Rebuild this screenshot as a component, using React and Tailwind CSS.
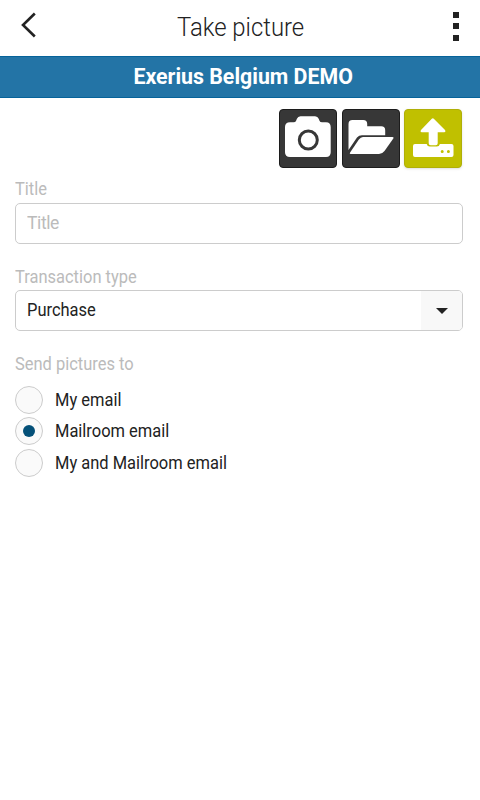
import { useState } from "react";

const options = ["My email", "Mailroom email", "My and Mailroom email"];

function CameraIcon() {
  return (
    <svg viewBox="1 1 56 57" className="h-full w-full" fill="#fff">
      <path d="M11 13.3h3.500q2 0 2.600-1.500l.8-2q1-2.600 3.600-2.600h14.600q2.600 0 3.600 2.600l.8 2q.6 1.500 2.600 1.500h3.900q4.700 0 4.700 4.700v25.300q0 4.700-4.700 4.700h-36Q6 48 6 43.300V18q0-4.700 5-4.700z" />
      <circle cx="29.3" cy="31" r="9" stroke="#373737" strokeWidth="3" />
    </svg>
  );
}

function FolderIcon() {
  return (
    <svg viewBox="1 1 56 57" className="h-full w-full" fill="#fff">
      <path d="M6.500 41V15q0-4 4-4h10.700q4 0 4 4v2.300h14q4 0 4 4v5H20q-3 0-5 2.300z" />
      <path d="M21 28h29.500q1.800 0 .8 1.600l-8.800 12.500q-2.200 3-5.500 3H8.800q-1.700 0-.7-1.600l8.600-12.700q1.900-2.800 4.300-2.800z" />
    </svg>
  );
}

function UploadIcon() {
  return (
    <svg viewBox="1 1 56 57" className="h-full w-full" fill="#fff">
      <path d="M27.800 9.700q1-1 2 0L41 21q1.200 2-.8 2.200h-6.500v11q0 2-2 2h-5q-2 0-2-2v-11h-6.900q-2-.2-.8-2.200z" />
      <path
        fillRule="evenodd"
        d="M11 35h11.700q.6 2.500 3 2.500h7.200q2.400 0 3-2.500H47.500q2 0 2 2v9q0 2-2 2H11q-2 0-2-2v-9q0-2 2-2zM38.200 41a1.500 1.500 0 1 0 0 3a1.500 1.500 0 1 0 0-3zM44.400 41a1.500 1.500 0 1 0 0 3a1.500 1.500 0 1 0 0-3z"
      />
    </svg>
  );
}

export default function App() {
  const [title, setTitle] = useState("");
  const [target, setTarget] = useState(options[1]);

  return (
    <div className="min-h-screen w-full bg-white font-['Roboto',sans-serif] text-[#222]">
      {/* Top bar */}
      <header className="flex h-14 items-center justify-between pl-5 pr-5">
        <button aria-label="Back" className="flex w-4 -translate-y-[3px] justify-end">
          <svg width="16" height="26" viewBox="0 0 16 26" fill="none" stroke="#222" strokeWidth="2.6">
            <path d="M14.800 1.500L3 13L14.800 24.500" />
          </svg>
        </button>
        <h1 className="scale-x-[.955] pl-0.5 text-[25px] font-light">Take picture</h1>
        <button aria-label="Menu" className="flex w-4 -translate-y-[2px] flex-col items-start gap-[5.500px] pl-[9px]">
          <span className="h-1.5 w-1.5 shrink-0 bg-[#222]" />
          <span className="h-1.5 w-1.5 shrink-0 bg-[#222]" />
          <span className="h-1.5 w-1.5 shrink-0 bg-[#222]" />
        </button>
      </header>

      <div className="flex h-[42px] items-center justify-center border-y border-[#06639a] bg-[#2374a6] pl-1.5 pb-0.5 text-[22px] font-bold text-white">
        <span className="scale-x-[.97]">Exerius Belgium DEMO</span>
      </div>

      <main className="pl-[15px] pr-[17px] pt-[11px]">
        {/* Actions */}
        <div className="flex justify-end gap-[4.500px] pr-px">
          <button aria-label="Camera" className="h-[59px] w-[58px] rounded-[4px] border border-[#1c1c1c] bg-[#373737]">
            <CameraIcon />
          </button>
          <button aria-label="Browse" className="h-[59px] w-[58px] rounded-[4px] border border-[#1c1c1c] bg-[#373737]">
            <FolderIcon />
          </button>
          <button aria-label="Upload" className="h-[59px] w-[58px] rounded-[4px] border border-[#b0af08] bg-[#c0c000] shadow-sm">
            <UploadIcon />
          </button>
        </div>

        <label className="mt-[11px] block origin-left scale-x-[.915] text-[18px] leading-5 text-[#bbb]">Title</label>
        <input
          value={title}
          onChange={(e) => setTitle(e.target.value)}
          placeholder="Title"
          className="mt-[4px] block h-[41px] w-full rounded-[5px] border border-[#ccc] px-[11px] pb-0.5 text-[17.500px] tracking-[-0.4px] placeholder:text-[#bbb]"
        />

        <label className="mt-[23px] block origin-left scale-x-[.915] text-[18px] leading-5 text-[#bbb]">
          Transaction type
        </label>
        <button className="mt-[3px] flex h-[41px] w-full items-center justify-between overflow-hidden rounded-[5px] border border-[#ccc] pl-[11px] text-[18px]">
          <span className="origin-left scale-x-[.915] pb-0.5">Purchase</span>
          <span className="flex h-full w-[41px] items-center justify-center bg-[#f8f8f8]">
            <svg width="12" height="6" viewBox="0 0 12 6" fill="#222">
              <path d="M0 0h12L6 6z" />
            </svg>
          </span>
        </button>

        <p className="mt-[23px] origin-left scale-x-[.915] text-[18px] leading-5 text-[#bbb]">Send pictures to</p>
        <div className="mt-[11.500px] flex flex-col gap-[3.500px]">
          {options.map((o) => (
            <button key={o} onClick={() => setTarget(o)} className="flex items-center gap-3 text-[18px] leading-5">
              <span className="flex h-7 w-7 items-center justify-center rounded-full border border-[#ccc] bg-[#fafafa]">
                {target === o && <span className="h-3 w-3 rounded-full bg-[#045078]" />}
              </span>
              <span className="origin-left scale-x-[.915]">{o}</span>
            </button>
          ))}
        </div>
      </main>
    </div>
  );
}
